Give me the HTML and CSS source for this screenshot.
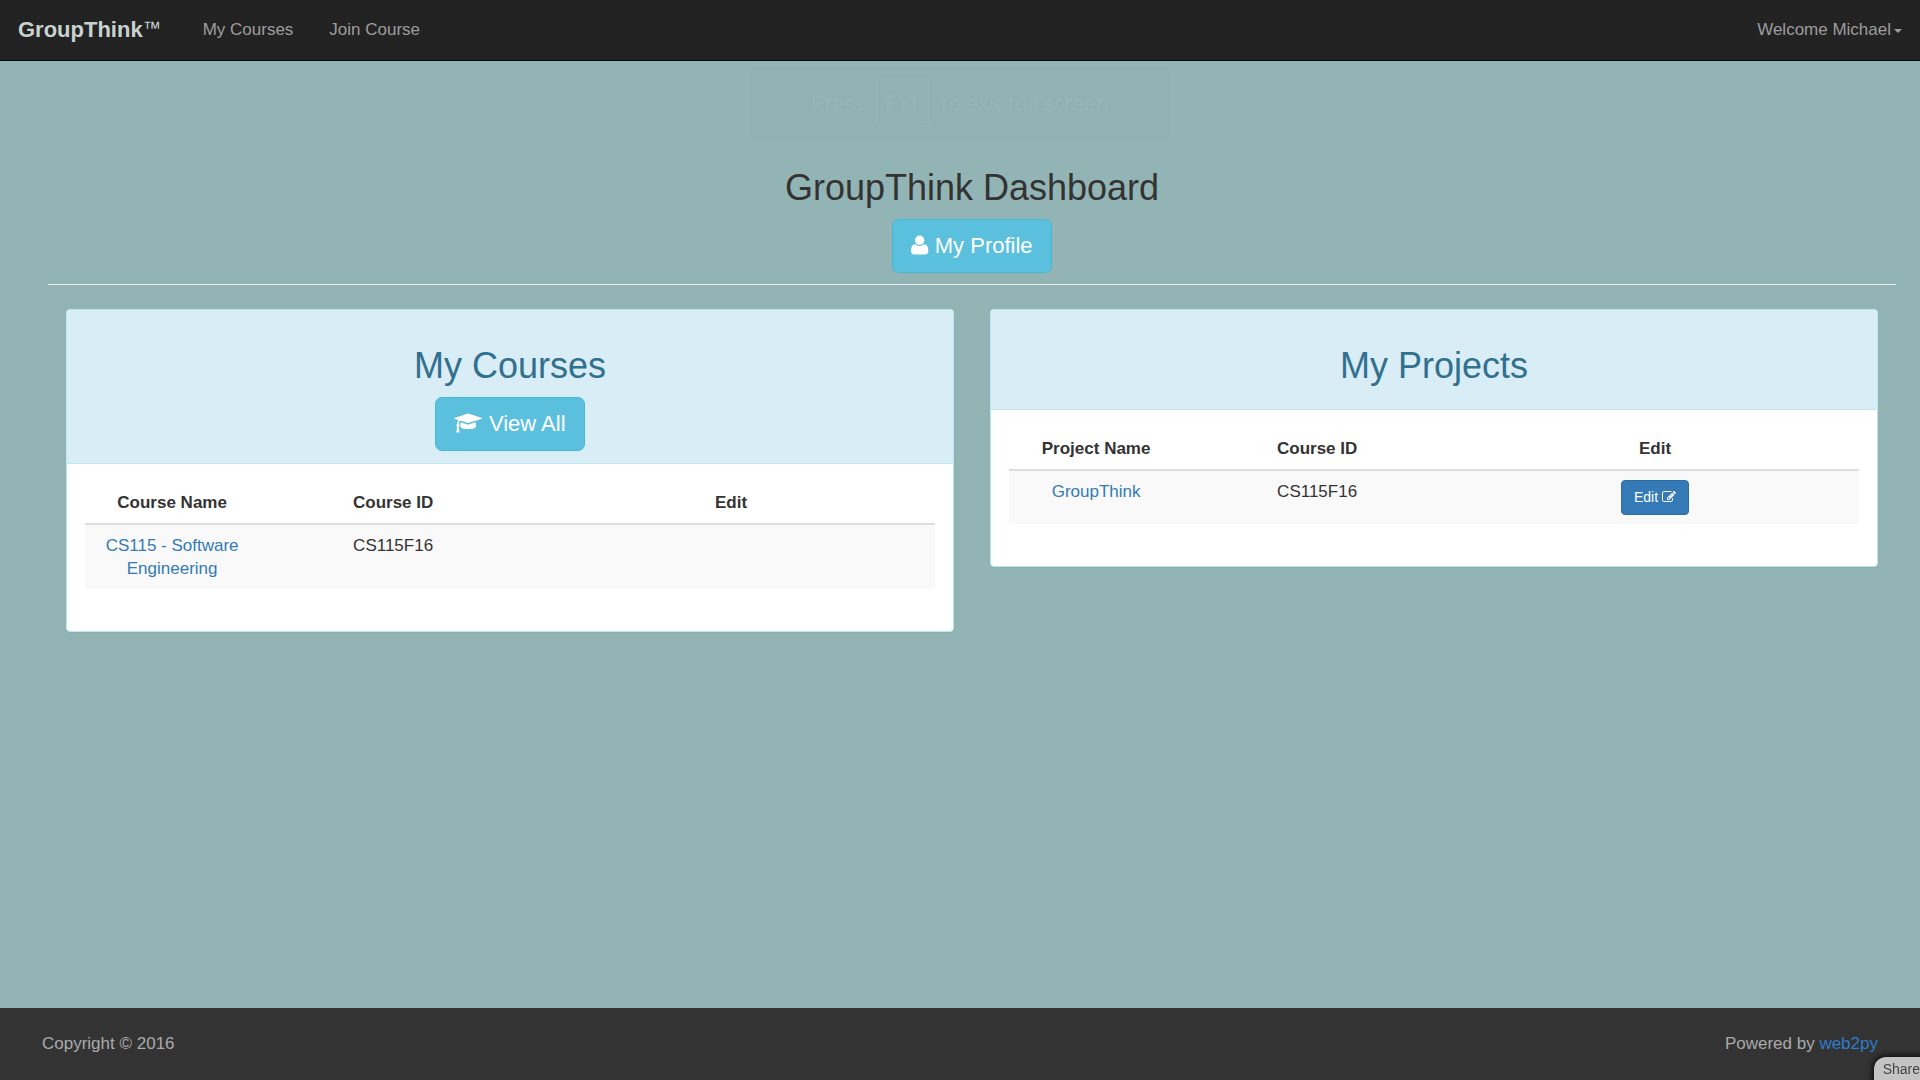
FILE: index.html
```html
<!DOCTYPE html>
<html lang="en">
<head>
<meta charset="utf-8">
<meta name="viewport" content="width=device-width, initial-scale=1">
<title>GroupThink Dashboard</title>
<link rel="stylesheet" href="styles.css">
</head>
<body>
<header class="navbar">
  <a class="brand" href="#">GroupThink<span class="mark">™</span></a>
  <nav class="nav">
    <a class="nav-link" href="#">My Courses</a>
    <a class="nav-link" href="#">Join Course</a>
  </nav>
  <button class="user-menu" type="button">Welcome Michael<span class="caret"></span></button>
</header>

<div class="toast"><span>Press</span><kbd class="key">F11</kbd><span>to exit full screen</span></div>

<main class="content">
  <section class="intro">
    <h1 class="title">GroupThink Dashboard</h1>
    <button class="btn btn-info" type="button">
      <svg class="icon" viewBox="0 0 1408 1792" aria-hidden="true"><path transform="translate(0 1536) scale(1 -1)" d="M1408 131q0 -120 -73 -189.5t-194 -69.5h-874q-121 0 -194 69.5t-73 189.5q0 53 3.5 103.5t14 109t26.5 108.5t43 97.5t62 81t85.5 53.5t111.5 20q9 0 42 -21.5t74.5 -48t108 -48t133.5 -21.5t133.5 21.5t108 48t74.5 48t42 21.5q61 0 111.5 -20t85.5 -53.5t62 -81t43 -97.5t26.5 -108.5t14 -109t3.5 -103.5zM1088 1024q0 -159 -112.5 -271.5t-271.5 -112.5t-271.5 112.5t-112.5 271.5t112.5 271.5t271.5 112.5t271.5 -112.5t112.5 -271.5z"/></svg>
      My Profile
    </button>
  </section>
  <hr class="rule">
  <div class="panels">
    <section class="panel">
      <div class="panel-heading">
        <h2 class="title">My Courses</h2>
        <button class="btn btn-info" type="button">
          <svg class="icon" viewBox="0 0 2304 1792" aria-hidden="true"><path transform="translate(0 1536) scale(1 -1)" d="M1774 700l18 -316q4 -69 -82 -128t-235 -93.5t-323 -34.5t-323 34.5t-235 93.5t-82 128l18 316l574 -181q22 -7 48 -7t48 7zM2304 1024q0 -23 -22 -31l-1120 -352q-4 -1 -10 -1t-10 1l-652 206q-43 -34 -71 -111.5t-34 -178.5q63 -36 63 -109q0 -69 -58 -107l58 -433q2 -14 -8 -25q-9 -11 -24 -11h-192q-15 0 -24 11q-10 11 -8 25l58 433q-58 38 -58 107q0 73 65 111q11 207 98 330l-333 104q-22 8 -22 31t22 31l1120 352q4 1 10 1t10 -1l1120 -352q22 -8 22 -31z"/></svg>
          View All
        </button>
      </div>
      <div class="panel-body">
        <table class="table">
          <colgroup><col class="col-name"><col class="col-id"><col class="col-edit"></colgroup>
          <thead><tr><th scope="col">Course Name</th><th scope="col">Course ID</th><th scope="col">Edit</th></tr></thead>
          <tbody><tr><td><a href="#">CS115 - Software Engineering</a></td><td>CS115F16</td><td></td></tr></tbody>
        </table>
      </div>
    </section>
    <section class="panel">
      <div class="panel-heading">
        <h2 class="title">My Projects</h2>
      </div>
      <div class="panel-body">
        <table class="table">
          <colgroup><col class="col-name"><col class="col-id"><col class="col-edit"></colgroup>
          <thead><tr><th scope="col">Project Name</th><th scope="col">Course ID</th><th scope="col">Edit</th></tr></thead>
          <tbody><tr><td><a href="#">GroupThink</a></td><td>CS115F16</td><td><button class="btn btn-primary" type="button">Edit
            <svg class="icon" viewBox="0 0 1792 1792" aria-hidden="true"><path transform="translate(0 1536) scale(1 -1)" d="M888 352l116 116l-152 152l-116 -116v-56h96v-96h56zM1328 1072q-16 16 -33 -1l-350 -350q-17 -17 -1 -33t33 1l350 350q17 17 1 33zM1408 478v-190q0 -119 -84.5 -203.5t-203.5 -84.5h-832q-119 0 -203.5 84.5t-84.5 203.5v832q0 119 84.5 203.5t203.5 84.5h832q63 0 117 -25q15 -7 18 -23q3 -17 -9 -29l-49 -49q-14 -14 -32 -8q-23 6 -45 6h-832q-66 0 -113 -47t-47 -113v-832q0 -66 47 -113t113 -47h832q66 0 113 47t47 113v126q0 13 9 22l64 64q15 15 35 7t20 -29zM1312 1216l288 -288l-672 -672h-288v288zM1756 1084l-92 -92l-288 288l92 92q28 28 68 28t68 -28l152 -152q28 -28 28 -68t-28 -68z"/></svg></button></td></tr></tbody>
        </table>
      </div>
    </section>
  </div>
</main>

<footer class="footer">
  <span>Copyright © 2016</span>
  <span>Powered by <a class="footer-link" href="#">web2py</a></span>
</footer>
<button class="share" type="button">Share</button>
</body>
</html>
```
FILE: styles.css
```css
* {
  box-sizing: border-box;
}

body {
  margin: 0;
  min-height: 100vh;
  display: flex;
  flex-direction: column;
  overflow-x: hidden;
  background: #93b4b5;
  color: #333;
  font: 17px/23px "Liberation Sans", Arial, sans-serif;
}

a {
  color: #337ab7;
  text-decoration: none;
}

button {
  font-family: inherit;
  cursor: pointer;
}

/* Top bar */
.navbar {
  display: flex;
  align-items: center;
  min-height: 61px;
  padding: 0 18px 2px;
  background: #222;
  border-bottom: 1px solid #080808;
}

.brand {
  margin-right: 24px;
  color: #c8d3d0;
  font-size: 22px;
  font-weight: bold;
}

.mark {
  font-size: 18px;
  font-weight: normal;
  line-height: 18px;
  vertical-align: 3px;
}

.nav {
  display: flex;
}

.nav-link {
  padding: 0 18px;
  color: #9d9d9d;
}

.user-menu {
  display: flex;
  align-items: center;
  gap: 3px;
  margin-left: auto;
  padding: 0;
  border: 0;
  background: none;
  color: #9d9d9d;
  font-size: 17px;
  line-height: 23px;
}

.caret {
  margin-top: 3px;
  border: 4px solid transparent;
  border-top-color: currentColor;
  border-bottom: 0;
}

/* Full-screen hint, almost faded out */
.toast {
  position: absolute;
  top: 67px;
  left: 50%;
  display: flex;
  align-items: center;
  justify-content: center;
  gap: 12px;
  width: 418px;
  height: 72px;
  transform: translateX(-50%);
  border-radius: 2px;
  background: #91b2b3;
  color: #95b6b7;
  font: 21px/30px "Noto Sans", sans-serif;
}

.key {
  padding: 8px;
  border: 1px solid #95b6b7;
  border-radius: 4px;
  font: inherit;
}

/* Dashboard */
.content {
  flex: 1;
  padding: 106px 24px 24px 48px;
}

.intro,
.panel {
  text-align: center;
}

.title {
  margin: 0 0 10px;
  font-size: 36px;
  font-weight: normal;
  line-height: 42px;
}

.btn {
  display: inline-block;
  vertical-align: top;
  border: 1px solid;
  color: #fff;
}

.btn-info {
  padding: 11px 18px;
  border-color: #46b8da;
  border-radius: 7px;
  background: #5bc0de;
  font-size: 22px;
  line-height: 30px;
}

.btn-primary {
  padding: 6px 12px;
  border-color: #2e6da4;
  border-radius: 4px;
  background: #337ab7;
  font-size: 14px;
  line-height: 21px;
}

.icon {
  height: 1em;
  vertical-align: -0.143em;
  fill: currentColor;
}

.rule {
  margin: 11px 0 24px;
  border: 0;
  border-top: 1px solid #eee;
}

.panels {
  display: grid;
  grid-template-columns: 1fr 1fr;
  align-items: start;
  gap: 36px;
  padding: 0 18px;
}

.panel {
  overflow: hidden;
  border: 1px solid #bce8f1;
  border-radius: 4px;
  background: #fff;
  box-shadow: 0 1px 1px rgba(0, 0, 0, 0.05);
}

.panel-heading {
  padding: 35px 18px 12px;
  border-bottom: 1px solid #bce8f1;
  background: #d9edf7;
  color: #31708f;
}

.panel .title:last-child {
  margin-bottom: 10px;
}

.panel-body {
  padding: 18px 18px 42px;
}

.table {
  width: 100%;
  table-layout: fixed;
  border-collapse: separate;
  border-spacing: 0;
}

.col-name {
  width: 20.5%;
}

.col-id {
  width: 31.5%;
}

.col-edit {
  width: 48%;
}

.table th,
.table td {
  padding: 9px;
  vertical-align: top;
}

.table th {
  border-bottom: 2px solid #ddd;
}

.table td {
  background: #f9f9f9;
}

/* Bottom bar */
.footer {
  display: flex;
  align-items: center;
  justify-content: space-between;
  min-height: 72px;
  padding: 0 42px 2px;
  background: #333;
  color: #aaa;
}

.footer-link {
  color: #2f7bc8;
}

.share {
  position: fixed;
  right: -9px;
  bottom: -5px;
  padding: 2px 9px 5px;
  border: 0;
  border-radius: 12px 0 0 0;
  background: #c4c4c4;
  box-shadow: 0 0 5px 2px #111;
  color: #444;
  font-size: 14px;
  line-height: 21px;
}
```
